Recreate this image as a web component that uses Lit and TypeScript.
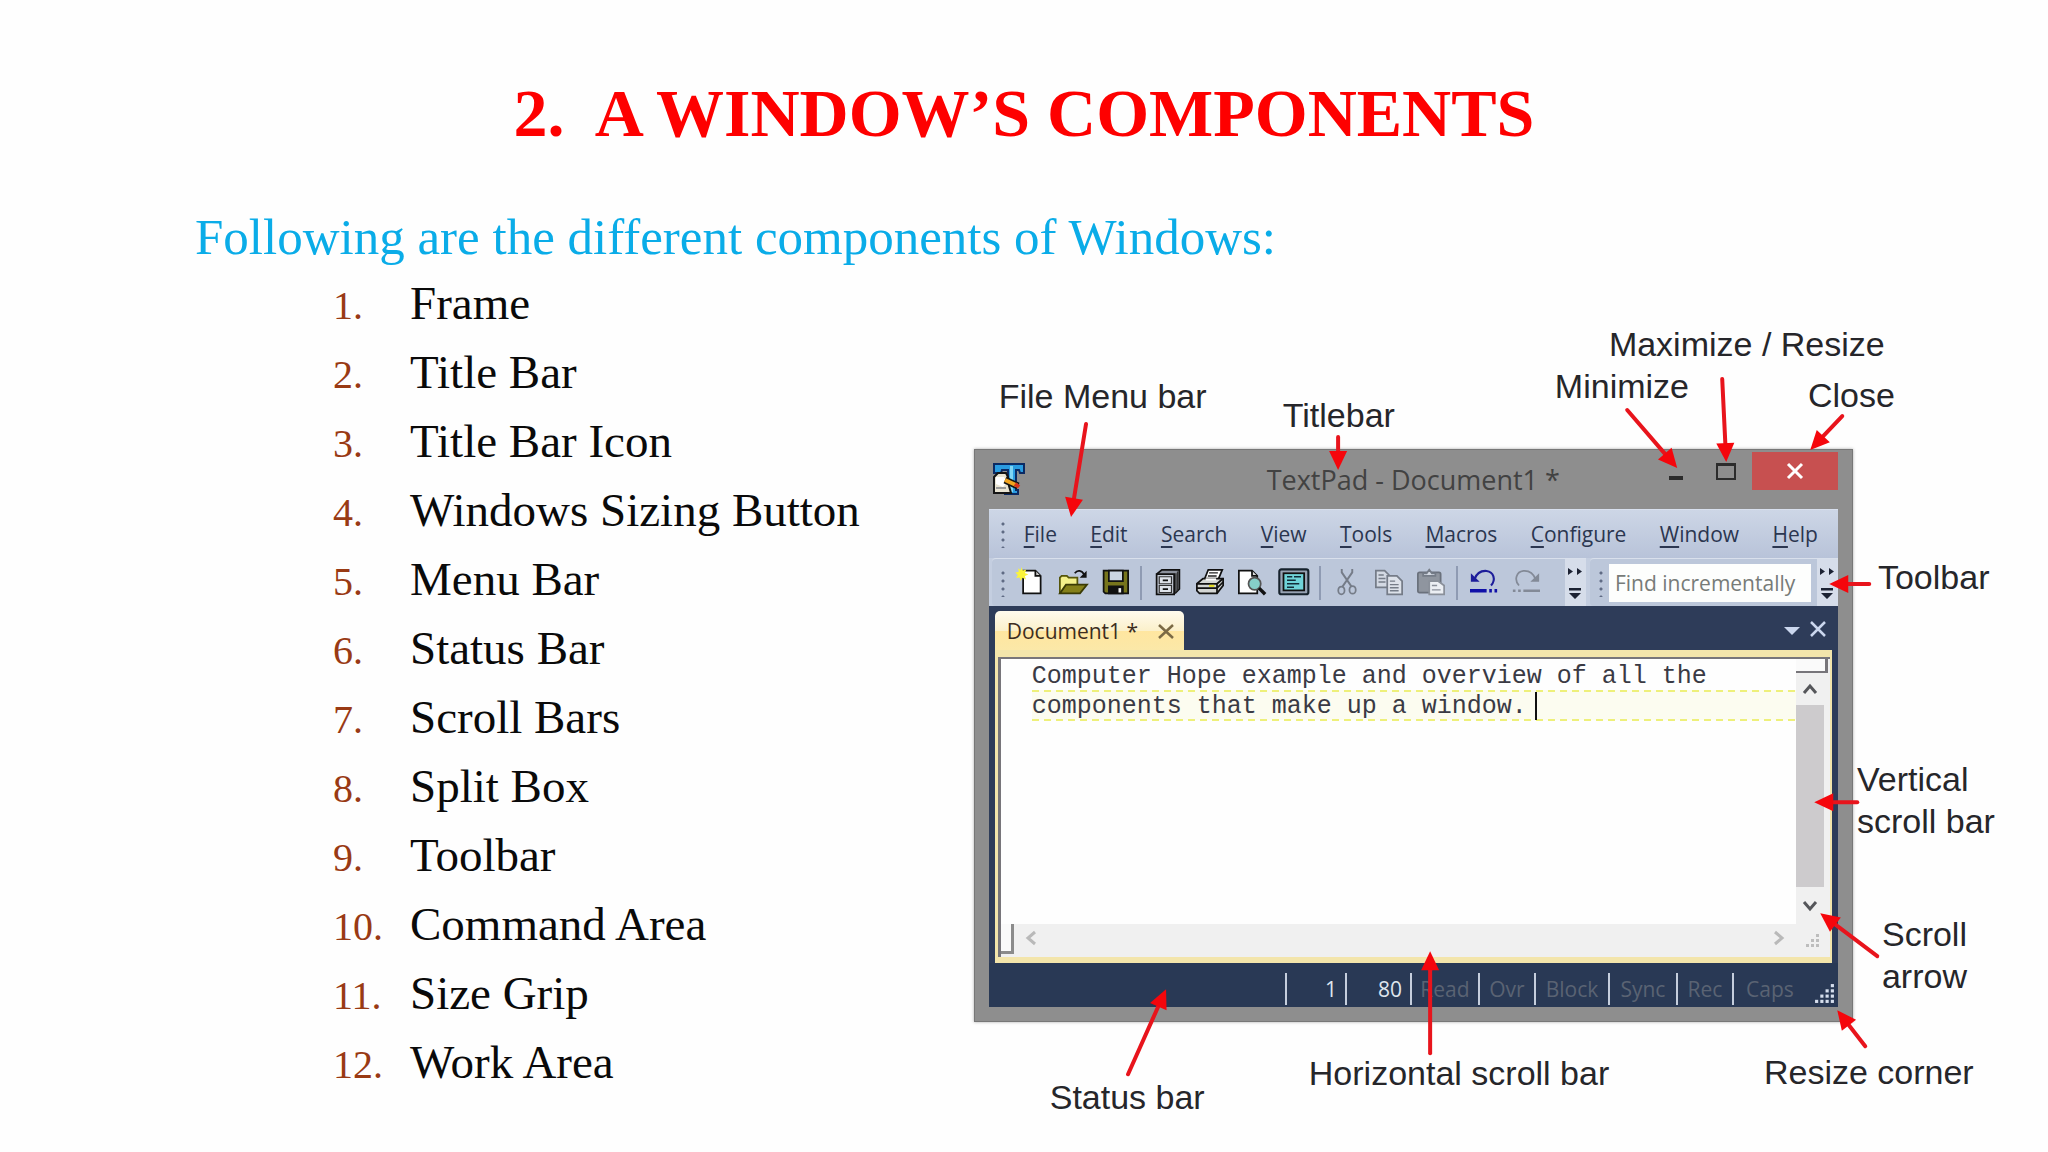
import { LitElement, html, svg, css } from "lit";
import { customElement } from "lit/decorators.js";

const COMPONENTS = [
  "Frame", "Title Bar", "Title Bar Icon", "Windows Sizing Button", "Menu Bar", "Status Bar",
  "Scroll Bars", "Split Box", "Toolbar", "Command Area", "Size Grip", "Work Area",
];

const MENUS = ["File", "Edit", "Search", "View", "Tools", "Macros", "Configure", "Window", "Help"];

/* Callouts live on a free canvas of these units. */
const CANVAS_W = 1038;
const CANVAS_H = 810;

const LABELS: { x: number; y: number; lines: string[] }[] = [
  { x: 25, y: 55, lines: ["File Menu bar"] },
  { x: 309, y: 74, lines: ["Titlebar"] },
  { x: 635, y: 3, lines: ["Maximize / Resize"] },
  { x: 581, y: 45, lines: ["Minimize"] },
  { x: 834, y: 54, lines: ["Close"] },
  { x: 904, y: 236, lines: ["Toolbar"] },
  { x: 883, y: 438, lines: ["Vertical", "scroll bar"] },
  { x: 908, y: 593, lines: ["Scroll", "arrow"] },
  { x: 790, y: 731, lines: ["Resize corner"] },
  { x: 335, y: 732, lines: ["Horizontal scroll bar"] },
  { x: 76, y: 756, lines: ["Status bar"] },
];

/* Tail x, tail y, tip x, tip y. */
const ARROWS: [number, number, number, number][] = [
  [112, 104, 97, 197],
  [364, 117, 364, 150],
  [653, 90, 703, 148],
  [748, 59, 752, 142],
  [868, 96, 836, 130],
  [895, 264, 855, 264],
  [883, 482, 840, 482],
  [903, 636, 846, 593],
  [891, 726, 863, 690],
  [456, 733, 456, 631],
  [154, 754, 192, 669],
];

const arrow = ([x1, y1, x2, y2]: [number, number, number, number]) => {
  const d = Math.hypot(x2 - x1, y2 - y1);
  const ux = (x2 - x1) / d;
  const uy = (y2 - y1) / d;
  const bx = x2 - ux * 19;
  const by = y2 - uy * 19;
  const p = (n: number) => n.toFixed(1);
  return svg`<path class="shaft" d="M${x1} ${y1}L${p(bx)} ${p(by)}"/>
    <path class="head" d="M${x2} ${y2}L${p(bx - uy * 9)} ${p(by + ux * 9)}L${p(bx + uy * 9)} ${p(by - ux * 9)}Z"/>`;
};

const ICONS: Record<string, unknown> = {
  New: svg`<path d="M3.5 1.5h7l3 3v10h-10z" fill="#fff" stroke="#111"/><path d="M10.5 1.5v3h3" fill="#ccc" stroke="#111"/>
    <path d="M2.5-.6l.8 2 2-.6-.8 2 2 .9-2 .8.6 2-2-.9-1 1.8-.6-2-2 .3 1-1.7-1.5-1.4 2-.4-.3-2 1.5 1.1z" fill="#fbf43a"/>`,
  Open: svg`<path d="M.5 14.5v-9l1-1h3l1 1h5v4" fill="#f4f08a" stroke="#55550a"/><path d="M.5 14.5l3.5-5h12l-4 5z" fill="#85801a" stroke="#3a3a05"/>
    <path d="M9 3c1.5-2 4-1.8 5.5 1" fill="none" stroke="#111"/><path d="M15.8 1.5v4h-4z" fill="#111"/>`,
  Save: svg`<path d="M1.5 1.5h14v13h-13l-1-1z" fill="#77751c" stroke="#111"/><path d="M4.5 1.5h8v6h-8z" fill="#cbd5e2" stroke="#111"/>
    <path d="M4.5 10.5h8v4h-8z" fill="#111" stroke="#111"/><path d="M10 11.5h1.5v2.5H10z" fill="#eee"/>`,
  Manage: svg`<path d="M1.5 3.5l3-2.5h10v11l-2.5 2.5" fill="#8c919c" stroke="#111"/><path d="M1.5 3.5h10v11.5h-10z" fill="#c9cfda" stroke="#111"/>
    <path d="M12.5 3v11M13.5 2v11" stroke="#333" stroke-width=".8"/><path d="M3 5h7v4H3zM3 10h7v4H3z" fill="#dfe3ea" stroke="#333" stroke-width=".7"/><path d="M5 7h3M5 12h3" stroke="#111"/>`,
  Print: svg`<path d="M5 6l2-5h8l-2.5 6z" fill="#fff" stroke="#111"/><path d="M7.5 2.8h5M6.8 4.6h5" stroke="#222" stroke-width=".8"/>
    <path d="M.5 9l3.5-3h11.5v4l-3.5 4.5H2l-1.5-1.5z" fill="#d4d6d4" stroke="#111"/><path d="M.5 9h11.500l3.500-3M.5 11.5H12l3.500-3.500M12 9v5.500" fill="none" stroke="#111"/><path d="M5.500 6.500h6" stroke="#fff" stroke-width="1.200"/><path d="M7.500 10.200h3" stroke="#e5dd21" stroke-width="1.200"/>`,
  Preview: svg`<path d="M.5 1.500h7.500l3 3v10H.5z" fill="#fff" stroke="#111"/><path d="M8 1.500v3h3" fill="#ddd" stroke="#111"/>
    <circle cx="9.500" cy="9" r="3.500" fill="#86cfc9" stroke="#555"/><path d="M12 11.500l3.500 3.500" stroke="#111" stroke-width="2"/>`,
  Configure: svg`<rect x="-.4" y=".8" width="16.6" height="14.2" rx="1.2" fill="#97a2b3" stroke="#16222c" stroke-width="1.2"/><rect x="2" y="3" width="11.8" height="9.8" fill="#6fd3d8" stroke="#111"/>
    <path d="M4 5h3M8 5h4M4 7h5M4 9h7M4 11h4" stroke="#122c38" stroke-width=".9"/>`,
  Cut: svg`<path d="M5 .5v2l5.5 8M11 .5v2l-5.5 8" fill="none" stroke="#757c88" stroke-width="1.1"/><ellipse cx="4.8" cy="12.8" rx="1.8" ry="2.2" fill="none" stroke="#757c88"/><ellipse cx="11.2" cy="12.5" rx="1.8" ry="2.2" fill="none" stroke="#757c88"/>`,
  Copy: svg`<path d="M.5 1.5h5l2.5 2.5v7H.5z" fill="#d3d9e3" stroke="#757c88"/><path d="M2 4h3M2 6h4M2 8h4" stroke="#757c88" stroke-width=".8"/>
    <path d="M7 4.5h5.5l3 3v7.5H7z" fill="#dde2ea" stroke="#757c88"/><path d="M8.5 7.5h3M8.5 9.5h5M8.5 11.3h5M8.5 13h5" stroke="#757c88" stroke-width=".8"/>`,
  Paste: svg`<rect x=".5" y="2.5" width="13" height="11.5" rx="1" fill="#8f959f" stroke="#6a717c"/><path d="M3.5 4.5V3h2l1.5-2 1.5 2h2v1.5z" fill="#d3d9e3" stroke="#757c88"/>
    <path d="M7 7.5h5l3.5 2.5v5H7z" fill="#eceff4" stroke="#8a909a"/><path d="M8.5 10h3M8.5 12.5h5" stroke="#8a909a" stroke-width=".8"/>`,
  Undo: svg`<path d="M2.5 6.5C4 2.5 7 1.5 9.5 1.7c4 .5 5.500 5 2.500 8.300" fill="none" stroke="#1d1d9a" stroke-width="1.200"/><path d="M.5 3v4.800h5z" fill="#1d1d9a"/>
    <path d="M0 13h9.500M11 13h1.500M14 13h1.500" stroke="#1010a8" stroke-width="2"/>`,
  Redo: svg`<path d="M13.500 6.500C12 2.500 9 1.500 6.500 1.700c-4 .5-5.500 5-2.500 8.300" fill="none" stroke="#838a97" stroke-width="1"/><path d="M15.500 3v4.800h-5z" fill="#838a97"/>
    <path d="M6.500 13H16M5 13H3.500M2 13H.5" stroke="#838a97" stroke-width="1.500"/>`,
};

const GROUPS = [
  ["New", "Open", "Save"],
  ["Manage", "Print", "Preview", "Configure"],
  ["Cut", "Copy", "Paste"],
  ["Undo", "Redo"],
];

const STATUS: { text: string; kind: string }[] = [
  { text: "1", kind: "w60 on" },
  { text: "80", kind: "w65 on" },
  { text: "Read", kind: "w68" },
  { text: "Ovr", kind: "w56" },
  { text: "Block", kind: "w74" },
  { text: "Sync", kind: "w68" },
  { text: "Rec", kind: "w56" },
  { text: "Caps", kind: "w74" },
];

const chevron = (d: string) => html`<svg class="chev" viewBox="0 0 16 16"><path d=${d}></path></svg>`;

const sizeGrip = (n: number, cls: string) => {
  const dots = [];
  for (let r = 0; r < n; r++) {
    for (let c = n - 1 - r; c < n; c++) {
      dots.push(svg`<rect x=${c * 5 + 1} y=${r * 5 + 1} width="3" height="3"/>`);
    }
  }
  return html`<svg class=${cls} viewBox="0 0 ${n * 5} ${n * 5}">${dots}</svg>`;
};

@customElement("textpad-window")
class TextpadWindow extends LitElement {
  static styles = css`
    :host {
      display: flex;
      flex-direction: column;
      box-sizing: border-box;
      min-width: 0;
      padding: 0 14px 14px;
      border: 1px solid #777;
      background: #8e8e8e;
      box-shadow: 0 0 3px #aaa;
      font-family: "Open Sans", "Noto Sans", sans-serif;
      font-size: 21px;
      line-height: 28px;
      color: #2b3650;
    }
    button {
      padding: 0;
      border: 0;
      background: none;
      font: inherit;
      color: inherit;
      display: flex;
      align-items: center;
      justify-content: center;
    }
    .title {
      flex: none;
      height: 59px;
      display: grid;
      grid-template-columns: 1fr auto 1fr;
      align-items: start;
    }
    .app-icon { width: 32px; height: 32px; margin: 13px 0 0 4px; }
    .caption { font-size: 27px; line-height: 36px; padding-top: 12px; color: #424242; }
    .controls { display: flex; justify-content: flex-end; }
    .ctl { width: 50px; height: 36px; padding-top: 8px; box-sizing: border-box; }
    .close { width: 86px; height: 38px; margin: 2px 0 0 1px; background: #c75050; }
    .body { flex: 1; min-height: 0; display: flex; flex-direction: column; }
    .menus {
      flex: none;
      height: 49px;
      display: flex;
      align-items: center;
      padding: 0 20px 0 12px;
      background: linear-gradient(#cdd6e6, #b8c3d9);
      border-top: 1px solid #d8e0ee;
      box-sizing: border-box;
    }
    .menu-items { flex: 1; display: flex; justify-content: space-between; margin-left: 19px; }
    .menu-items u { text-underline-offset: 4px; text-decoration-thickness: 2px; }
    .grip {
      flex: none;
      width: 4px;
      height: 28px;
      background: radial-gradient(circle, #5f6b84 1px, transparent 2px) 0 0 / 4px 8px;
    }
    .tools { flex: none; height: 48px; display: flex; align-items: stretch; background: #c4cee0; }
    .strip {
      display: flex;
      align-items: center;
      padding-left: 9px;
      margin-left: 3px;
      border-radius: 4px 0 0 4px;
      background: #bcc7da;
      border-top: 1px solid #d9e0ec;
      box-sizing: border-box;
    }
    .strip.main { flex: 1; min-width: 0; }
    .strip.find { margin-left: 4px; }
    .btns { display: flex; align-items: center; margin-left: 5px; }
    .tool { width: 42px; height: 42px; padding-bottom: 2px; }
    .tool svg { width: 28px; height: 28px; overflow: visible; }
    .sep { width: 2px; height: 34px; margin: 0 5px 0 4px; background: #8f9bb3; }
    .more { width: 21px; align-self: stretch; background: #d6ddea; }
    .main .more { margin-left: auto; }
    .more svg { width: 20px; height: 40px; }
    .search {
      width: 202px;
      height: 38px;
      margin: 0 6px;
      padding: 0 6px;
      box-sizing: border-box;
      border: 0;
      background: #fdfefd;
      font: inherit;
    }
    .search::placeholder { color: #777b78; opacity: 1; }
    .docs {
      flex: 1;
      min-height: 0;
      display: flex;
      flex-direction: column;
      padding: 5px 6px 0;
      background: #2e3c59;
    }
    .tabs { flex: none; height: 39px; display: flex; align-items: center; }
    .tab {
      width: 189px;
      height: 39px;
      box-sizing: border-box;
      display: flex;
      align-items: center;
      justify-content: space-between;
      padding: 0 10px 0 12px;
      border-radius: 5px 5px 0 0;
      background: linear-gradient(#fffbee, #fbf0cb 50%, #ffe6a0 52%, #fbe8a8);
      color: #3d2d20;
    }
    .tab-close svg { width: 16px; height: 16px; }
    .tab-tools { margin-left: auto; display: flex; gap: 10px; padding: 0 6px 4px 0; }
    .tab-tools svg { width: 16px; height: 16px; }
    .panel {
      flex: 1;
      min-height: 0;
      display: flex;
      padding: 7px 2px 6px 3px;
      background: #f3e5ab;
    }
    .editor {
      flex: 1;
      display: grid;
      grid-template: 1fr 33px / 1fr 34px;
      border: solid #77757a;
      border-width: 2px 0 0 3px;
      background: #f0f0f0;
    }
    .work { position: relative; display: flex; background: #fefefe; }
    .text {
      flex: 1;
      box-sizing: border-box;
      margin: 0;
      padding: 3px 0 0 31px;
      border: 0;
      resize: none;
      overflow: hidden;
      outline: none;
      white-space: pre;
      font: 25px/30px "Liberation Mono", monospace;
      color: #3a3a44;
      background:
        repeating-linear-gradient(90deg, #eef07a 0 7px, transparent 7px 12px) 31px 31px / 100% 2px no-repeat,
        repeating-linear-gradient(90deg, #eef07a 0 7px, transparent 7px 12px) 31px 60px / 100% 2px no-repeat,
        linear-gradient(#fcfcf0, #fcfcf0) 31px 31px / 100% 30px no-repeat,
        #fefefe;
    }
    .caret { position: absolute; left: 534px; top: 33px; width: 2px; height: 28px; background: #111; }
    .vbar { display: flex; flex-direction: column; }
    .split-v {
      flex: none;
      height: 14px;
      width: 32px;
      box-sizing: border-box;
      border: solid #77757a;
      border-width: 0 3px 2px 0;
      background: #fafafa;
    }
    .vbar button { flex: none; width: 28px; height: 32px; color: #55565a; }
    .vbar button:last-child { height: 37px; }
    .thumb { flex: 1; width: 28px; background: #cdcbcd; }
    .hbar { display: flex; align-items: flex-start; color: #b9b9b9; }
    .split-h {
      width: 13px;
      height: 30px;
      box-sizing: border-box;
      border: solid #8b8b8b;
      border-width: 0 3px 3px 0;
      background: #fafafa;
    }
    .hbar button { width: 34px; height: 28px; }
    .hbar button:nth-child(2) { margin-right: auto; }
    .corner { display: flex; align-items: center; justify-content: center; }
    .chev { width: 16px; height: 16px; fill: none; stroke: currentColor; stroke-width: 3; }
    .grip-sm { width: 15px; height: 15px; fill: #bdbdbd; }
    .grip-lg { width: 21px; height: 21px; fill: #d5deed; margin: 0 3px 1px 8px; }
    .status {
      flex: none;
      height: 44px;
      display: flex;
      align-items: flex-end;
      justify-content: flex-end;
      padding-bottom: 2px;
      box-sizing: border-box;
      background: #293955;
      color: #5a6373;
    }
    .cell {
      height: 32px;
      line-height: 32px;
      box-sizing: border-box;
      border-left: 2px solid #c5cedd;
      text-align: center;
    }
    .on { color: #dfe5ee; text-align: right; padding-right: 8px; }
    .w56 { width: 56px; }
    .w60 { width: 60px; }
    .w65 { width: 65px; }
    .w68 { width: 68px; }
    .w74 { width: 74px; }
  `;

  private more() {
    return html`<button class="more" aria-label="More buttons">
      <svg viewBox="0 0 20 40"><path d="M3 5l5 3.5-5 3.5zM12 5l5 3.5-5 3.5zM4 25h12v2.5H4zM4 30h12l-6 6z" fill="#1c2233"/></svg>
    </button>`;
  }

  render() {
    return html`
      <div class="title">
        <svg class="app-icon" viewBox="0 0 32 32">
          <path d="M1 1h30v9h-4l-1-3h-3v20h2v4H12v-4h3V7H9L8 10H1z" fill="#2a9ce0" stroke="#0b2a63" stroke-width="2"/>
          <path d="M17 3h3v26h-3z" fill="#7fd6f5"/>
          <path d="M1 14l4-4h8l2 4 1 9 2 7H1z" fill="#e9e4d2" stroke="#151515" stroke-width="2"/>
          <path d="M3 14h8l3 5-4 5-7-3z" fill="#fff"/>
          <path d="M12 17l13 6" stroke="#151515" stroke-width="7"/>
          <path d="M12 17l12 5.5" stroke="#f2a41f" stroke-width="4"/>
          <path d="M22 21l4 3" stroke="#d8331c" stroke-width="4"/>
          <path d="M3 25h10" stroke="#999" stroke-width="2"/>
        </svg>
        <div class="caption">TextPad - Document1 *</div>
        <div class="controls">
          <button class="ctl" aria-label="Minimize"><svg width="20" height="20"><path d="M3 14h14v4H3z" fill="#2c2c2c"/></svg></button>
          <button class="ctl" aria-label="Maximize"><svg width="20" height="20"><path d="M1 3h18M1 2v15h18V2z" fill="none" stroke="#2c2c2c" stroke-width="2"/></svg></button>
          <button class="close" aria-label="Close"><svg width="18" height="18"><path d="M2 2l14 14M16 2L2 16" stroke="#fff" stroke-width="3"/></svg></button>
        </div>
      </div>
      <div class="body">
        <nav class="menus">
          <span class="grip"></span>
          <div class="menu-items">
            ${MENUS.map((m) => html`<button><span><u>${m[0]}</u>${m.slice(1)}</span></button>`)}
          </div>
        </nav>
        <div class="tools">
          <div class="strip main">
            <span class="grip"></span>
            <div class="btns">
              ${GROUPS.map(
                (g, i) => html`${i ? html`<span class="sep"></span>` : ""}${g.map(
                  (n) => html`<button class="tool" aria-label=${n}><svg viewBox="0 0 16 16">${ICONS[n]}</svg></button>`
                )}`
              )}
            </div>
            ${this.more()}
          </div>
          <div class="strip find">
            <span class="grip"></span>
            <input class="search" type="text" aria-label="Find incrementally" placeholder="Find incrementally" />
            ${this.more()}
          </div>
        </div>
        <div class="docs">
          <div class="tabs">
            <div class="tab">
              <span>Document1 *</span>
              <button class="tab-close" aria-label="Close document">
                <svg viewBox="0 0 16 16"><path d="M1 2l14 13M15 2L1 15" stroke="#7b6a45" stroke-width="2.5"/></svg>
              </button>
            </div>
            <div class="tab-tools">
              <button aria-label="Document list"><svg viewBox="0 0 16 16"><path d="M0 6h16l-8 8z" fill="#cbd7ee"/></svg></button>
              <button aria-label="Close tab"><svg viewBox="0 0 16 16"><path d="M1 1l14 14M15 1L1 15" stroke="#cbd7ee" stroke-width="2.5"/></svg></button>
            </div>
          </div>
          <div class="panel">
            <div class="editor">
              <div class="work">
                <textarea class="text" aria-label="Document text" spellcheck="false" .value=${"Computer Hope example and overview of all the\ncomponents that make up a window."}></textarea>
                <span class="caret"></span>
              </div>
              <div class="vbar">
                <div class="split-v"></div>
                <button aria-label="Scroll up">${chevron("M2 12l6-7 6 7")}</button>
                <div class="thumb"></div>
                <button aria-label="Scroll down">${chevron("M2 4l6 7 6-7")}</button>
              </div>
              <div class="hbar">
                <div class="split-h"></div>
                <button aria-label="Scroll left">${chevron("M12 2L5 8l7 6")}</button>
                <button aria-label="Scroll right">${chevron("M4 2l7 6-7 6")}</button>
              </div>
              <div class="corner">${sizeGrip(3, "grip-sm")}</div>
            </div>
          </div>
        </div>
        <div class="status">
          ${STATUS.map((s) => html`<div class="cell ${s.kind}">${s.text}</div>`)}
          ${sizeGrip(4, "grip-lg")}
        </div>
      </div>
    `;
  }
}

@customElement("app-root")
class AppRoot extends LitElement {
  static styles = css`
    :host {
      display: block;
      min-height: 100vh;
      box-sizing: border-box;
      padding: 73px 36px 20px;
      background: #fefefe;
      font-family: "Liberation Serif", serif;
      color: #0a0a0a;
    }
    h1 {
      margin: 0;
      text-align: center;
      font-size: 68px;
      line-height: 80px;
      font-weight: bold;
      color: #fe0000;
    }
    main { margin-left: 159px; }
    .lead { margin: 55px 0 3px; font-size: 51px; line-height: 58px; color: #0aace8; }
    .columns { display: grid; grid-template-columns: 3fr 4fr; align-items: start; }
    ol { margin: 0; padding: 0 0 0 138px; list-style: none; font-size: 47px; line-height: 69px; }
    li { display: flex; align-items: baseline; }
    .num { width: 77px; flex: none; font-size: 40px; line-height: 48px; color: #993a14; }
    figure {
      position: relative;
      margin: 51px 0 0;
      aspect-ratio: 173 / 135;
      display: grid;
      grid-template: 129fr 573fr 108fr / 879fr 159fr;
    }
    textpad-window { grid-area: 2 / 1; }
    .arrows { position: absolute; inset: 0; width: 100%; height: 100%; pointer-events: none; }
    .shaft { stroke: #e8141c; stroke-width: 4; stroke-linecap: round; }
    .head { fill: #f5060c; }
    .label {
      position: absolute;
      white-space: nowrap;
      font: 34px/42px "Liberation Sans", sans-serif;
      color: #26262a;
    }
    .line { display: block; }
  `;

  render() {
    return html`
      <h1>2.&nbsp; A WINDOW’S COMPONENTS</h1>
      <main>
        <p class="lead">Following are the different components of Windows:</p>
        <div class="columns">
          <ol>
            ${COMPONENTS.map((c, i) => html`<li><span class="num">${i + 1}.</span><span>${c}</span></li>`)}
          </ol>
          <figure>
            <textpad-window></textpad-window>
            ${LABELS.map(
              (l) => html`<div class="label" style="left:${(l.x / CANVAS_W) * 100}%;top:${(l.y / CANVAS_H) * 100}%">
                ${l.lines.map((t) => html`<span class="line">${t}</span>`)}
              </div>`
            )}
            <svg class="arrows" viewBox="0 0 ${CANVAS_W} ${CANVAS_H}" preserveAspectRatio="none">${ARROWS.map(arrow)}</svg>
          </figure>
        </div>
      </main>
    `;
  }
}
